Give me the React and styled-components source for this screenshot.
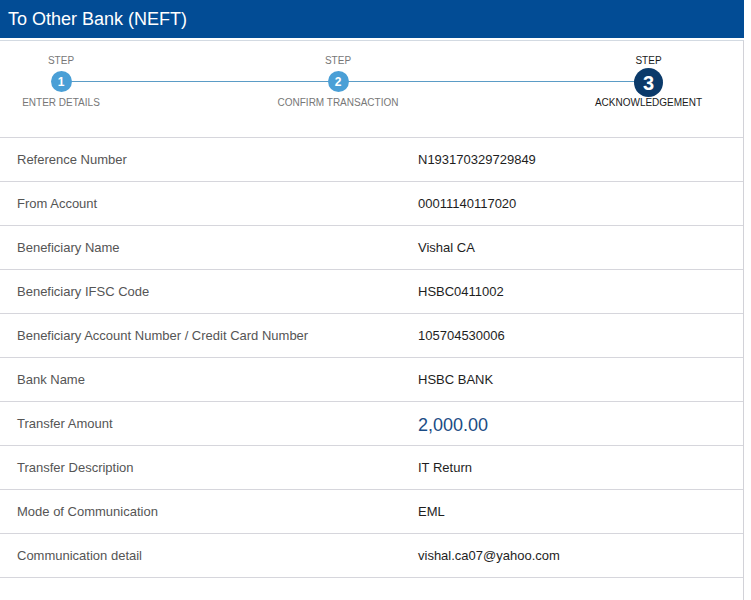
import React from "react";
import styled, { createGlobalStyle } from "styled-components";

const Global = createGlobalStyle`
  html, body { margin: 0; padding: 0; background: #ffffff; }
  body { font-family: "Liberation Sans", Arial, sans-serif; }
  *, *::before, *::after { box-sizing: border-box; }
`;

const Page = styled.div`
  width: 744px;
`;

const Header = styled.div`
  height: 38px;
  background: #024c95;
  color: #ffffff;
  font-size: 18px;
  line-height: 38px;
  padding-left: 8px;
  margin-bottom: 2px;
`;

const Card = styled.div`
  border-top: 1px solid #d3dae2;
  border-right: 1px solid #d2d2d8;
`;

const Steps = styled.div`
  position: relative;
  display: grid;
  grid-template-columns: 122px 432px 189px;
  height: 96px;
  padding-top: 14px;
`;

const Connector = styled.div`
  position: absolute;
  top: 40px;
  left: 61px;
  width: 586px;
  height: 1px;
  background: #5b9cc6;
`;

const Step = styled.div`
  position: relative;
  display: flex;
  flex-direction: column;
  align-items: center;
  font-size: 10px;
  line-height: 12px;
  color: ${(p) => (p.$active ? "#1b1b1b" : "#777777")};
  text-transform: uppercase;
  white-space: nowrap;
`;

const CircleSlot = styled.div`
  height: 21px;
  margin: 4px 0 5px;
  display: flex;
  align-items: center;
  justify-content: center;
`;

const Circle = styled.div`
  flex: none;
  width: ${(p) => (p.$active ? 29 : 21)}px;
  height: ${(p) => (p.$active ? 29 : 21)}px;
  border-radius: 50%;
  background: ${(p) => (p.$active ? "#0b3a6a" : "#4a9fd6")};
  color: #ffffff;
  font-weight: bold;
  font-size: ${(p) => (p.$active ? 20 : 12)}px;
  display: flex;
  align-items: center;
  justify-content: center;
  margin-top: ${(p) => (p.$active ? 2 : 0)}px;
`;

const Row = styled.div`
  display: grid;
  grid-template-columns: 418px 1fr;
  align-items: center;
  height: 44px;
  border-top: 1px solid #d6d6dc;
  font-size: 13px;
`;

const Label = styled.div`
  padding-left: 17px;
  color: #555555;
`;

const Value = styled.div`
  color: ${(p) => (p.$amount ? "#1a4c85" : "#1e1e1e")};
  font-size: ${(p) => (p.$amount ? 18 : 13)}px;
  margin-top: ${(p) => (p.$amount ? 4 : 0)}px;
`;

const Bottom = styled.div`
  border-top: 1px solid #d6d6dc;
  height: 30px;
`;

const steps = [
  { n: 1, label: "Enter Details" },
  { n: 2, label: "Confirm Transaction" },
  { n: 3, label: "Acknowledgement", active: true },
];

const rows = [
  ["Reference Number", "N193170329729849"],
  ["From Account", "00011140117020"],
  ["Beneficiary Name", "Vishal CA"],
  ["Beneficiary IFSC Code", "HSBC0411002"],
  ["Beneficiary Account Number / Credit Card Number", "105704530006"],
  ["Bank Name", "HSBC BANK"],
  ["Transfer Amount", "2,000.00", true],
  ["Transfer Description", "IT Return"],
  ["Mode of Communication", "EML"],
  ["Communication detail", "vishal.ca07@yahoo.com"],
];

export default function App() {
  return (
    <Page>
      <Global />
      <Header>To Other Bank (NEFT)</Header>
      <Card>
        <Steps>
          <Connector />
          {steps.map((s) => (
            <Step key={s.n} $active={s.active}>
              <span>Step</span>
              <CircleSlot>
                <Circle $active={s.active}>{s.n}</Circle>
              </CircleSlot>
              <span>{s.label}</span>
            </Step>
          ))}
        </Steps>
        {rows.map(([l, v, amt]) => (
          <Row key={l}>
            <Label>{l}</Label>
            <Value $amount={amt}>{v}</Value>
          </Row>
        ))}
        <Bottom />
      </Card>
    </Page>
  );
}
